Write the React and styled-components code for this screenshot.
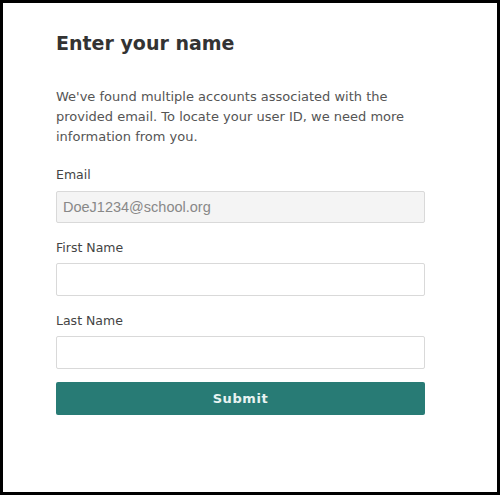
import styled, { createGlobalStyle } from 'styled-components';

const GlobalStyle = createGlobalStyle`
  html, body {
    margin: 0;
    padding: 0;
    background: #fff;
  }
  * {
    box-sizing: border-box;
  }
`;

const Frame = styled.div`
  width: 500px;
  height: 495px;
  border: 3px solid #000;
  background: #fff;
  padding: 28px 0 0 53px;
  font-family: 'DejaVu Sans', 'Liberation Sans', sans-serif;
`;

const Form = styled.form`
  width: 369px;
  display: flex;
  flex-direction: column;
`;

const Title = styled.h1`
  margin: 0 0 32px;
  font-size: 19px;
  line-height: 24px;
  font-weight: 700;
  color: #333;
`;

const Intro = styled.p`
  margin: 0 0 18px;
  font-size: 13px;
  line-height: 20px;
  color: #555;
`;

const Field = styled.div`
  display: flex;
  flex-direction: column;
  margin-bottom: 13px;
`;

const Label = styled.label`
  font-size: 12.5px;
  line-height: 20px;
  color: #444;
  margin: ${(p) => (p.$first ? '0 0 6px' : '2px 0 5px')};
`;

const Input = styled.input`
  height: ${(p) => (p.readOnly ? '32px' : '33px')};
  width: 100%;
  border: 1px solid #d9d9d9;
  border-radius: 2px;
  padding: 0 6px;
  font-family: 'Liberation Sans', Arial, sans-serif;
  font-size: 14.5px;
  color: #888;
  background: ${(p) => (p.readOnly ? '#f4f4f4' : '#fff')};
  outline: none;
`;

const SubmitButton = styled.button`
  height: 33px;
  width: 100%;
  border: none;
  border-radius: 2px;
  background: #287b75;
  color: #e8f3f2;
  font-family: 'DejaVu Sans', 'Liberation Sans', sans-serif;
  font-size: 13px;
  font-weight: 600;
  letter-spacing: 0.6px;
  cursor: pointer;
`;

export default function App() {
  return (
    <>
      <GlobalStyle />
      <Frame>
        <Form onSubmit={(e) => e.preventDefault()}>
          <Title>Enter your name</Title>
          <Intro>
            We've found multiple accounts associated with the provided email. To locate your user ID, we need more
            information from you.
          </Intro>
          <Field>
            <Label $first>Email</Label>
            <Input readOnly value='DoeJ1234@school.org' />
          </Field>
          <Field>
            <Label>First Name</Label>
            <Input />
          </Field>
          <Field>
            <Label>Last Name</Label>
            <Input />
          </Field>
          <SubmitButton type='submit'>Submit</SubmitButton>
        </Form>
      </Frame>
    </>
  );
}
